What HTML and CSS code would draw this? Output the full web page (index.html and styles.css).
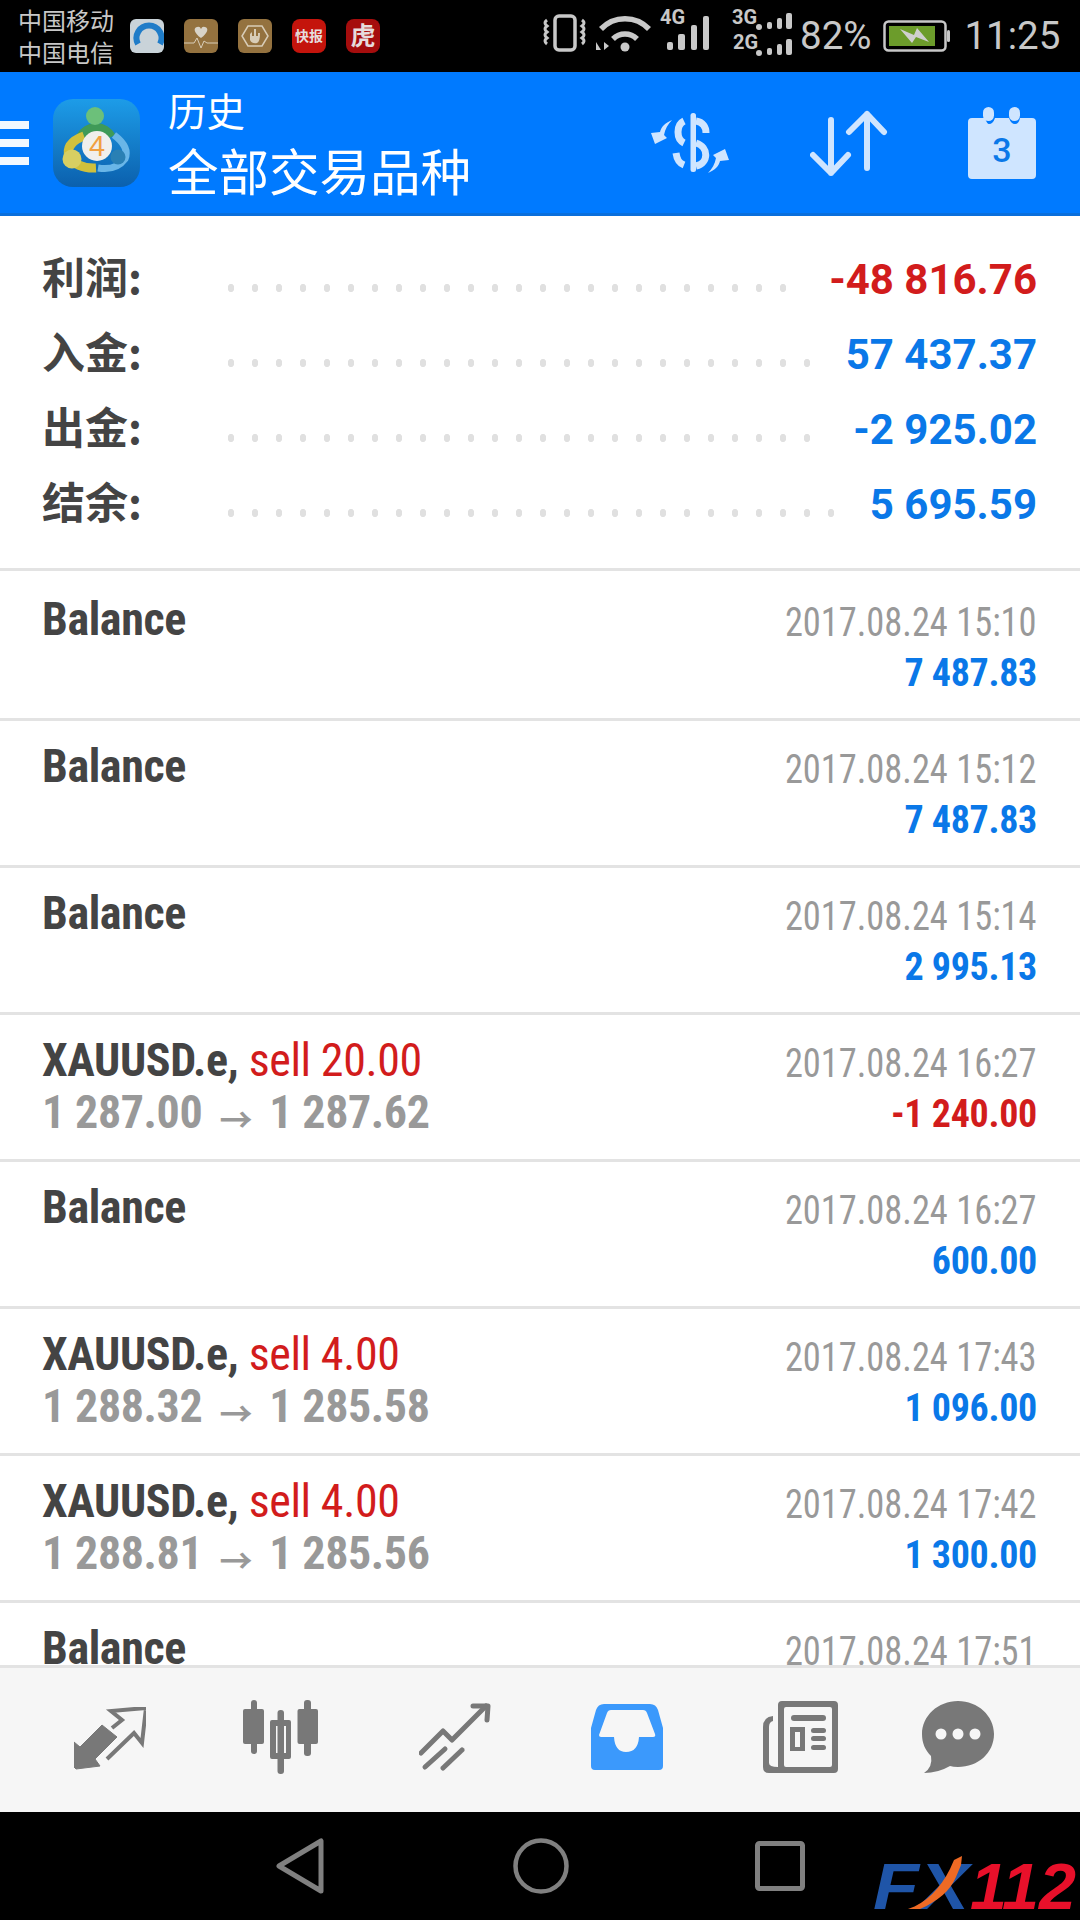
FILE: index.html
```html
<!DOCTYPE html>
<html lang="zh-CN">
  <head>
    <meta charset="UTF-8" />
    <meta name="viewport" content="width=device-width, initial-scale=1.0" />
    <title>历史</title>
    <link rel="stylesheet" href="styles.css">
  </head>
  <body>
    <div class="status">
      <div class="carrier">
        <p>中国移动</p>
        <p>中国电信</p>
      </div>
      <div class="apps">
        <svg viewBox="0 0 34 34" width="34" height="34"><rect width="34" height="34" rx="6" fill="#c9d3d9"/><path d="M8 25A12.5 12.5 0 1 1 30 25" fill="none" stroke="#1f7cc8" stroke-width="6"/></svg>
        <svg viewBox="0 0 34 34" width="34" height="34"><rect width="34" height="34" rx="6" fill="#94723f"/><path d="M17 19C10 14 9 9 13 8Q16 7 17 10Q18 7 21 8C25 9 24 14 17 19Z" fill="#d8d3c8"/><path d="M0 24H10L13 19L17 29L20 22L23 24H34" fill="none" stroke="#d8cdb8" stroke-width="1"/></svg>
        <svg viewBox="0 0 34 34" width="34" height="34"><rect width="34" height="34" rx="6" fill="#94723f"/><path d="M10 7H24L30 17L24 27H10L4 17Z" fill="none" stroke="#d8cdb8" stroke-width="1.5"/><path d="M12 15V21Q14 25 19 24Q22 23 22 14H20V17H18V10H16V17H14V13Z" fill="#d8cdb8"/></svg>
        <svg viewBox="0 0 34 34" width="34" height="34"><rect width="34" height="34" rx="8" fill="#c4140c"/><text class="app-text" x="17" y="22" font-size="14" text-anchor="middle">快报</text></svg>
        <svg viewBox="0 0 34 34" width="34" height="34"><rect width="34" height="34" rx="8" fill="#a50d0d"/><text class="app-text" x="17" y="26" font-size="25" text-anchor="middle">虎</text></svg>
      </div>
      <div class="status-right">
        <svg class="signal" viewBox="0 0 270 65" width="270" height="65">
          <g fill="none" stroke="#c8c8c8">
            <rect x="15" y="14" width="20" height="34" rx="4" stroke-width="3.5"/>
            <path d="M7 18Q3 21 7 24Q3 27 7 30Q3 33 7 36Q3 39 7 42" stroke-width="3"/>
            <path d="M42 18Q46 21 42 24Q46 27 42 30Q46 33 42 36Q46 39 42 42" stroke-width="3"/>
            <path d="M61 27A33 33 0 0 1 109 27" stroke-width="5.500"/>
            <path d="M73 37A17 17 0 0 1 97 37" stroke-width="5.500"/>
          </g>
          <g fill="#c8c8c8">
            <circle cx="85" cy="45" r="4.500"/>
            <path d="M56 48V40L61 48ZM64 40L69 44L64 48Z"/>
            <text class="net" x="120" y="22">4G</text>
            <rect x="127" y="40" width="6" height="8" rx="2"/>
            <rect x="138" y="32" width="7" height="16" rx="2"/>
            <rect x="151" y="23" width="6" height="25" rx="2"/>
            <rect x="163" y="14" width="6" height="34" rx="2"/>
            <text class="net" x="192" y="22">3G</text>
            <circle cx="219" cy="25" r="3"/>
            <rect x="227" y="20" width="5" height="7" rx="2"/>
            <rect x="237" y="16" width="5" height="11" rx="2"/>
            <rect x="246" y="11" width="6" height="16" rx="2"/>
            <text class="net" x="193" y="47">2G</text>
            <circle cx="219" cy="51" r="3"/>
            <rect x="227" y="46" width="5" height="7" rx="2"/>
            <rect x="237" y="42" width="5" height="11" rx="2"/>
            <rect x="246" y="37" width="6" height="16" rx="2"/>
          </g>
        </svg>
        <span class="percent">82%</span>
        <svg class="battery" viewBox="0 0 68 32" width="68" height="32">
          <rect x="1.500" y="1.500" width="61" height="29" rx="4" fill="none" stroke="#c8c8c8" stroke-width="2.500"/>
          <rect x="64" y="10" width="3" height="12" rx="1.500" fill="#c8c8c8"/>
          <rect x="6" y="6" width="46" height="20" fill="#6c9c2b"/>
          <path d="M17 9L31 15L34 8L46 22L33 17L29 23Z" fill="#cfcfcf"/>
        </svg>
        <span class="clock">11:25</span>
      </div>
    </div>

    <div class="header">
      <div class="burger"><span></span><span></span><span></span></div>
      <svg class="logo" viewBox="13 10 87 88" width="87" height="88">
        <defs>
          <linearGradient id="logo-bg" x1="0" y1="0" x2="0" y2="1">
            <stop offset="0" stop-color="#1d9ce8"/>
            <stop offset="1" stop-color="#0b60ad"/>
          </linearGradient>
        </defs>
        <rect x="13" y="10" width="87" height="88" rx="20" fill="url(#logo-bg)"/>
        <g fill="none">
          <path d="M41 48A17 17 0 0 1 71 48" stroke="#3f9a58" stroke-width="10"/>
          <path d="M74 46Q90 58 85 70Q76 82 58 79" stroke="#69b6e8" stroke-width="7"/>
          <path d="M44 47Q25 54 29 68Q38 80 56 79" stroke="#d0c03c" stroke-width="9"/>
        </g>
        <circle cx="55" cy="27" r="9" fill="#6cc07a"/>
        <circle cx="32" cy="70" r="9.500" fill="#d8cf62"/>
        <circle cx="78" cy="68" r="7.500" fill="#2a80b4"/>
        <circle cx="57" cy="57" r="15" fill="#f0efec"/>
        <text class="logo-four" x="57" y="67" text-anchor="middle">4</text>
      </svg>
      <div class="title">
        <p class="title-small">历史</p>
        <p class="title-big">全部交易品种</p>
      </div>
      <div class="actions">
        <svg viewBox="10 10 80 64" width="80" height="64">
          <g fill="#cfe5ff">
            <rect x="50.500" y="12" width="5.500" height="59" rx="2.500"/>
            <path d="M32 19C25 22 21 26 20 31L11 32L15 43L27 37L24 34C25 28 28 23 32 19Z"/>
            <path d="M68 72C75 69 79 65 80 60L89 59L85 48L73 54L76 57C75 63 72 68 68 72Z"/>
          </g>
          <g fill="none" stroke="#cfe5ff" stroke-width="7">
            <path d="M56 20C63 21 66 26 66 32"/>
            <path d="M44 20C36 24 36 38 44 42"/>
            <path d="M56 42C69 46 69 62 56 65"/>
            <path d="M36 52C37 59 39 62 44 64"/>
          </g>
        </svg>
        <svg viewBox="0 0 78 66" width="78" height="66">
          <g fill="none" stroke="#cfe5ff" stroke-width="6" stroke-linecap="round" stroke-linejoin="round">
            <path d="M21 10V63M3 45L21 63L38 45"/>
            <path d="M57 4V58M39 22L57 4L74 22"/>
          </g>
        </svg>
        <svg class="calendar" viewBox="0 0 68 72" width="68" height="72">
          <path d="M4 11H17Q19 17 21 17Q25 17 27 11H41Q43 17 47 17Q51 17 52 11H64Q68 11 68 15V68Q68 72 64 72H4Q0 72 0 68V15Q0 11 4 11Z" fill="#cfe5ff"/>
          <rect x="15" y="0" width="11" height="14" rx="5.500" fill="#cfe5ff"/>
          <rect x="41" y="0" width="11" height="14" rx="5.500" fill="#cfe5ff"/>
          <text class="cal-day" x="34" y="55" text-anchor="middle">3</text>
        </svg>
      </div>
    </div>

    <div class="summary">
      <div class="sum-row">
        <span class="sum-label">利润:</span>
        <span class="dots dots-24"></span>
        <span class="sum-value loss">-48 816.76</span>
      </div>
      <div class="sum-row">
        <span class="sum-label">入金:</span>
        <span class="dots dots-25"></span>
        <span class="sum-value gain">57 437.37</span>
      </div>
      <div class="sum-row">
        <span class="sum-label">出金:</span>
        <span class="dots dots-25"></span>
        <span class="sum-value gain">-2 925.02</span>
      </div>
      <div class="sum-row">
        <span class="sum-label">结余:</span>
        <span class="dots dots-26"></span>
        <span class="sum-value gain">5 695.59</span>
      </div>
    </div>

    <div class="deals">
      <div class="deal first">
        <div class="deal-left"><p class="name">Balance</p></div>
        <div class="deal-right"><p class="date">2017.08.24 15:10</p><p class="amount gain">7 487.83</p></div>
      </div>
      <div class="deal">
        <div class="deal-left"><p class="name">Balance</p></div>
        <div class="deal-right"><p class="date">2017.08.24 15:12</p><p class="amount gain">7 487.83</p></div>
      </div>
      <div class="deal">
        <div class="deal-left"><p class="name">Balance</p></div>
        <div class="deal-right"><p class="date">2017.08.24 15:14</p><p class="amount gain">2 995.13</p></div>
      </div>
      <div class="deal">
        <div class="deal-left"><p class="name">XAUUSD.e, <span class="side">sell 20.00</span></p><p class="prices">1 287.00 <i class="arrow">→</i> 1 287.62</p></div>
        <div class="deal-right"><p class="date">2017.08.24 16:27</p><p class="amount loss">-1 240.00</p></div>
      </div>
      <div class="deal">
        <div class="deal-left"><p class="name">Balance</p></div>
        <div class="deal-right"><p class="date">2017.08.24 16:27</p><p class="amount gain">600.00</p></div>
      </div>
      <div class="deal">
        <div class="deal-left"><p class="name">XAUUSD.e, <span class="side">sell 4.00</span></p><p class="prices">1 288.32 <i class="arrow">→</i> 1 285.58</p></div>
        <div class="deal-right"><p class="date">2017.08.24 17:43</p><p class="amount gain">1 096.00</p></div>
      </div>
      <div class="deal">
        <div class="deal-left"><p class="name">XAUUSD.e, <span class="side">sell 4.00</span></p><p class="prices">1 288.81 <i class="arrow">→</i> 1 285.56</p></div>
        <div class="deal-right"><p class="date">2017.08.24 17:42</p><p class="amount gain">1 300.00</p></div>
      </div>
      <div class="deal">
        <div class="deal-left"><p class="name">Balance</p></div>
        <div class="deal-right"><p class="date">2017.08.24 17:51</p></div>
      </div>
    </div>

    <div class="tabs">
      <svg class="tab-trade" viewBox="0 0 72 64" width="72" height="64">
        <path d="M0 60V35L6 40L28 18L43 30L21 52L26 59L2 62Z" fill="#787878" stroke="#787878" stroke-linejoin="round"/>
        <path d="M38 21L48 13L37 4L72 1L68 36L60 26L33 52" fill="none" stroke="#787878" stroke-width="4"/>
      </svg>
      <svg viewBox="0 0 75 74" width="75" height="74">
        <g fill="#787878">
          <rect x="8" y="0" width="6" height="54" rx="3"/>
          <rect x="0" y="9" width="21" height="35" rx="2"/>
          <rect x="34.500" y="10" width="6.500" height="64" rx="3"/>
          <path fill-rule="evenodd" d="M29 20H46Q48 20 48 22V57Q48 59 46 59H29Q27 59 27 57V22Q27 20 29 20ZM33 26V53H43V26Z"/>
          <rect x="61" y="0" width="7" height="56" rx="3"/>
          <rect x="54.500" y="9" width="20.500" height="35" rx="2"/>
        </g>
      </svg>
      <svg viewBox="0 0 72 68" width="72" height="68">
        <g fill="none" stroke="#787878" stroke-width="5" stroke-linecap="round" stroke-linejoin="round">
          <path d="M2 50L24 28L33 37L67 3"/>
          <path d="M54 3H69L68 17"/>
          <path d="M6 64L26 46"/>
          <path d="M24 65L43 47"/>
        </g>
      </svg>
      <svg viewBox="0 0 72 66" width="72" height="66">
        <path fill-rule="evenodd" fill="#3b99fc" d="M13 0H59Q65 0 67 6L72 24V62Q72 66 68 66H4Q0 66 0 62V24L5 6Q7 0 13 0ZM20 6Q17 6 16 9L8 31Q8 33 10 33H23Q24 48 35 48Q47 48 48 33H62Q65 33 64 30L56 9Q55 6 52 6Z"/>
      </svg>
      <svg viewBox="0 0 75 72" width="75" height="72">
        <path fill-rule="evenodd" fill="#787878" d="M19 0H71Q75 0 75 4V68Q75 72 71 72H6Q0 72 0 66V26Q0 16 10 15V20Q6 21 6 26V62Q6 66 15 66V4Q15 0 19 0ZM23 6Q21 6 21 8V64Q21 66 23 66H67Q69 66 69 64V8Q69 6 67 6Z"/>
        <g fill="#787878">
          <rect x="28" y="14" width="35" height="6" rx="3"/>
          <path fill-rule="evenodd" d="M27 26H42V50H27ZM32 31V46H37V31Z"/>
          <rect x="48" y="27" width="15" height="5" rx="2.500"/>
          <rect x="48" y="35" width="15" height="5" rx="2.500"/>
          <rect x="48" y="44" width="15" height="5" rx="2.500"/>
        </g>
      </svg>
      <svg viewBox="0 0 72 72" width="72" height="72">
        <path fill="#787878" d="M36 0C56 0 72 15 72 33C72 52 56 66 36 66Q31 66 28 65Q16 72 2 72Q11 66 9 55C3 49 0 42 0 33C0 15 16 0 36 0Z"/>
        <circle cx="19" cy="33" r="5.500" fill="#f6f6f6"/>
        <circle cx="36" cy="33" r="5.500" fill="#f6f6f6"/>
        <circle cx="53" cy="33" r="5.500" fill="#f6f6f6"/>
      </svg>
    </div>

    <div class="nav">
      <svg class="nav-back" viewBox="0 0 48 56" width="48" height="56">
        <path d="M45 3V53L3 28Z" fill="none" stroke="#808080" stroke-width="5" stroke-linejoin="round"/>
      </svg>
      <svg viewBox="0 0 56 56" width="56" height="56">
        <circle cx="28" cy="28" r="25.500" fill="none" stroke="#808080" stroke-width="4.500"/>
      </svg>
      <svg viewBox="0 0 50 50" width="50" height="50">
        <rect x="2.500" y="2.500" width="45" height="45" rx="2" fill="none" stroke="#808080" stroke-width="5"/>
      </svg>
      <svg class="watermark" viewBox="0 0 210 70" width="210" height="70">
        <text class="wm-text" x="3" y="64" textLength="96" lengthAdjust="spacingAndGlyphs" fill="#1f55a8">FX</text>
        <text class="wm-text" x="100" y="64" textLength="106" lengthAdjust="spacingAndGlyphs" fill="#e8102a">112</text>
        <path d="M38 64C56 58 70 44 80 24L84 15L92 11L91 20L86 32C80 46 68 56 50 64Z" fill="#ee6a24"/>
      </svg>
    </div>
  </body>
</html>
```

FILE: styles.css
```css
* {
  box-sizing: border-box;
}

body {
  margin: 0;
  width: 1080px;
  height: 1920px;
  overflow: hidden;
  display: flex;
  flex-direction: column;
  background: white;
  font-family: Roboto, "Noto Sans CJK SC", sans-serif;
}

p {
  margin: 0;
}

svg {
  display: block;
  flex: none;
}

/* status bar */
.status {
  height: 72px;
  background: black;
  color: #c8c8c8;
  display: flex;
  align-items: center;
  padding-left: 18px;
}

.carrier {
  width: 112px;
  font-size: 24px;
  line-height: 32px;
  font-family: "Noto Sans CJK SC", sans-serif;
}

.apps {
  display: flex;
  gap: 20px;
}

.app-text {
  fill: #e6dcdc;
  font-family: "Noto Sans CJK SC", sans-serif;
  font-weight: 700;
}

.status-right {
  margin-left: auto;
  height: 72px;
  display: flex;
  align-items: center;
  width: 540px;
}

.signal {
  margin-bottom: 4px;
}

.net {
  font-size: 20px;
  font-weight: 700;
}

.percent,
.clock {
  font-size: 38.500px;
  line-height: 72px;
}

.percent {
  margin-left: -10px;
}

.battery {
  margin-left: 12px;
}

.clock {
  margin-left: 13px;
}

/* blue title bar */
.header {
  height: 144px;
  background: #007aff;
  border-bottom: 3px solid #0a6fdc;
  display: flex;
  align-items: center;
  color: white;
}

.burger {
  width: 29px;
  display: flex;
  flex-direction: column;
  gap: 10px;
}

.burger span {
  height: 8px;
  background: #f2f8ff;
}

.logo {
  margin-left: 24px;
  margin-top: 1px;
}

.logo-four {
  fill: #f0a040;
  font-size: 29px;
  font-family: "Liberation Sans", sans-serif;
}

.title {
  margin-left: 28px;
  font-family: "Noto Sans CJK SC", sans-serif;
}

.title-small {
  font-size: 38.500px;
  line-height: 48px;
}

.title-big {
  font-size: 50.500px;
  line-height: 64px;
  margin-top: 4px;
}

.actions {
  margin-left: auto;
  padding-right: 44px;
  display: flex;
  align-items: center;
  gap: 80px;
}

.cal-day {
  fill: #0a78e8;
  font-size: 34px;
  font-weight: 500;
}

/* totals */
.summary {
  height: 355px;
  padding: 25px 43px 0 42px;
  border-bottom: 3px solid #e3e3e3;
}

.sum-row {
  height: 75px;
  display: flex;
  align-items: center;
}

.sum-label {
  width: 185px;
  margin-bottom: 8px;
  font-size: 43px;
  font-weight: 700;
  color: #444;
  font-family: "Noto Sans CJK SC", sans-serif;
}

.dots {
  height: 10px;
  margin-top: 18px;
  background-image: radial-gradient(ellipse 3.500px 4.500px at 4px 5px, #e0e0e0 85%, transparent 100%);
  background-size: 24px 10px;
  background-repeat: repeat-x;
}

.dots-24 {
  width: 576px;
}

.dots-25 {
  width: 600px;
}

.dots-26 {
  width: 624px;
}

.sum-value {
  margin-left: auto;
  margin-top: 2px;
  font-size: 42px;
  font-weight: 700;
  font-stretch: 90%;
}

.gain {
  color: #0a78e8;
}

.loss {
  color: #d21c1c;
}

/* deal rows */
.deals {
  flex: 1;
  overflow: hidden;
}

.deal {
  height: 147px;
  padding: 22px 43px 0 42px;
  border-bottom: 3px solid #e3e3e3;
  display: flex;
  justify-content: space-between;
}

.deal.first {
  height: 150px;
  padding-top: 25px;
}

.deal-left {
  margin-top: -3px;
}

.deal-left p {
  line-height: 52px;
}

.deal-right {
  text-align: right;
  margin-top: 1px;
}

.deal-right p {
  line-height: 51px;
}

.name,
.prices,
.date,
.amount {
  font-stretch: 75%;
}

.name {
  font-size: 46px;
  font-weight: 700;
  letter-spacing: -0.4px;
  color: #444;
}

.side {
  font-weight: 400;
  color: #d21c1c;
}

.prices {
  font-size: 46px;
  font-weight: 700;
  letter-spacing: -0.4px;
  color: #999;
}

.arrow {
  font-style: normal;
  font-size: 33px;
  font-weight: 700;
  vertical-align: -4px;
  margin: 0 7px;
}

.date {
  font-size: 40px;
  color: #999;
  transform: scaleX(0.91);
  transform-origin: right center;
}

.amount {
  font-size: 38px;
  font-weight: 700;
  letter-spacing: -0.3px;
}

/* bottom tabs */
.tabs {
  height: 147px;
  background: #f6f6f6;
  border-top: 3px solid #e3e3e3;
  padding: 0 0 6px 74px;
  display: grid;
  grid-template-columns: 169px 176px 172px 172px 159px 72px;
  align-items: center;
}

.tab-trade {
  margin-top: 4px;
}

/* android nav */
.nav {
  height: 108px;
  background: black;
  position: relative;
  padding-left: 276px;
  display: flex;
  align-items: center;
  gap: 186px;
}

.nav-back {
  margin-right: 3px;
}

.watermark {
  position: absolute;
  left: 870px;
  top: 33px;
}

.wm-text {
  font-family: "Liberation Sans", sans-serif;
  font-size: 64px;
  font-weight: 700;
  font-style: italic;
}
```
